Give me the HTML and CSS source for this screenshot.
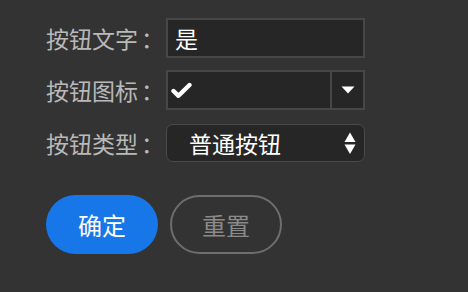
FILE: index.html
```html
<!DOCTYPE html>
<html lang="zh">
<head>
<meta charset="utf-8">
<link rel="stylesheet" href="styles.css">
</head>
<body>
<div class="form">
  <div class="row r1">
    <div class="label">按钮文字<span class="colon">：</span></div>
    <div class="input">是</div>
  </div>
  <div class="row r2">
    <div class="label">按钮图标<span class="colon">：</span></div>
    <div class="combo">
      <div class="combo-value">
        <svg width="21" height="17" viewBox="0 0 21 17"><polyline points="2.5,9 7.5,13.8 18.5,3" fill="none" stroke="#fff" stroke-width="4.4" stroke-linecap="round" stroke-linejoin="round"/></svg>
      </div>
      <div class="combo-btn">
        <svg width="14" height="8" viewBox="0 0 14 8"><polygon points="0.5,0.5 13.5,0.5 7,7.5" fill="#fff"/></svg>
      </div>
    </div>
  </div>
  <div class="row r3">
    <div class="label">按钮类型<span class="colon">：</span></div>
    <div class="select">
      <span class="select-text">普通按钮</span>
      <svg class="updown" width="12" height="23" viewBox="0 0 12 23"><polygon points="6,0.5 11.5,10 0.5,10" fill="#fff"/><polygon points="0.5,12.5 11.5,12.5 6,22" fill="#fff"/></svg>
    </div>
  </div>
  <div class="actions">
    <button class="btn primary">确定</button>
    <button class="btn ghost">重置</button>
  </div>
</div>
</body>
</html>
```
FILE: styles.css
```css
html, body {
  margin: 0;
  padding: 0;
  background: #333333;
  width: 468px;
  height: 292px;
  overflow: hidden;
}
.form {
  padding: 18px 0 0 46px;
  display: flex;
  flex-direction: column;
  font-family: "Noto Sans CJK SC", "Noto Sans", sans-serif;
}
.row {
  display: flex;
  align-items: center;
}
.r2 { margin-top: 12px; }
.r3 { margin-top: 14px; }
.label {
  width: 120px;
  font-size: 23px;
  color: #b9b9b9;
  line-height: 30px;
  white-space: nowrap;
}
.colon {
  display: inline-block;
  margin-left: 3px;
}
.input {
  box-sizing: border-box;
  width: 199px;
  height: 40px;
  background: #262626;
  border: 2px solid #474747;
  color: #ffffff;
  font-size: 23px;
  line-height: 36px;
  padding-left: 7px;
}
.combo {
  box-sizing: border-box;
  width: 199px;
  height: 40px;
  background: #262626;
  border: 2px solid #474747;
  display: flex;
}
.combo-value {
  flex: 1;
  display: flex;
  align-items: center;
  padding-left: 3px;
}
.combo-btn {
  box-sizing: border-box;
  width: 33px;
  border-left: 2px solid #474747;
  display: flex;
  align-items: center;
  justify-content: center;
}
.select {
  box-sizing: border-box;
  width: 199px;
  height: 38px;
  background: #262626;
  border: 1.5px solid #4a4a4a;
  border-radius: 7px;
  display: flex;
  align-items: center;
  justify-content: space-between;
  padding: 0 8px 0 22px;
}
.select-text {
  color: #ffffff;
  font-size: 23px;
  line-height: 30px;
}
.actions {
  display: flex;
  gap: 12px;
  margin-top: 33px;
}
.btn {
  box-sizing: border-box;
  width: 112px;
  height: 59px;
  border-radius: 30px;
  font-family: "Noto Sans CJK SC", "Noto Sans", sans-serif;
  font-size: 24px;
  padding: 0;
  cursor: pointer;
}
.primary {
  background: #1777e8;
  border: none;
  color: #ffffff;
}
.ghost {
  background: transparent;
  border: 2px solid #6e6e6e;
  color: #8a8a8a;
}
```
